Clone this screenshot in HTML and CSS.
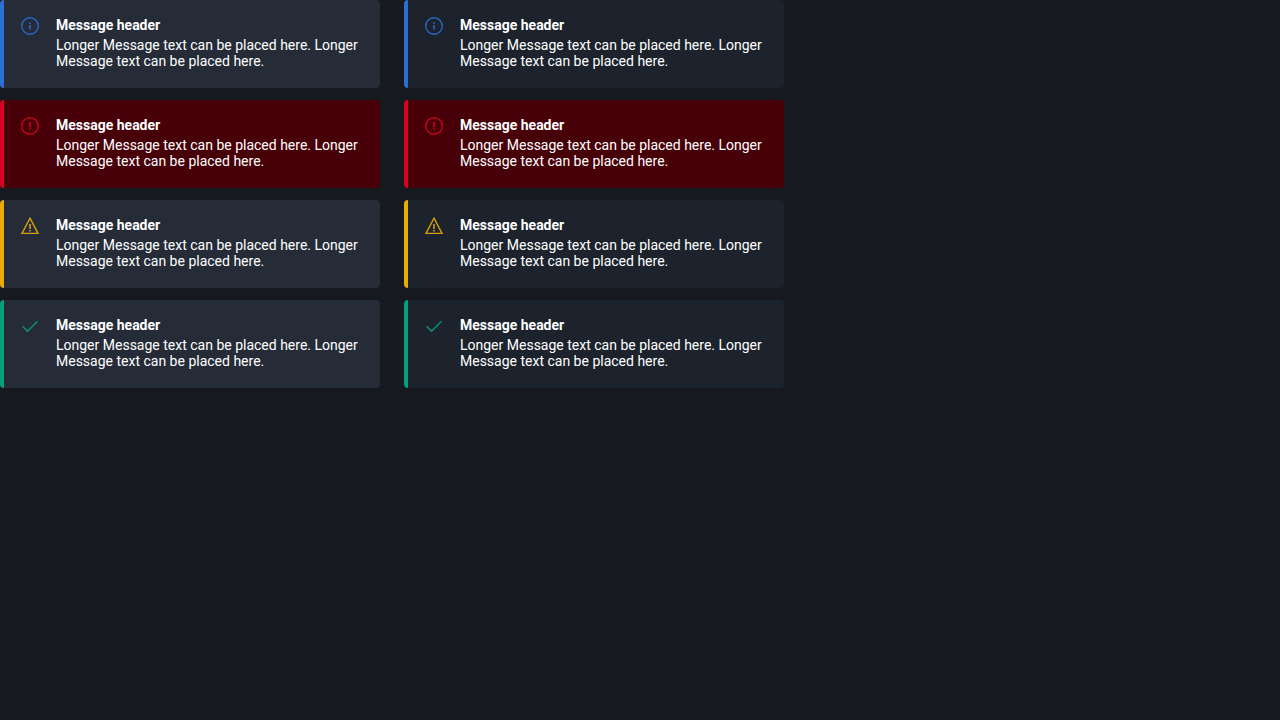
FILE: index.html
```html
<!DOCTYPE html>
<html lang="en">
<head>
<meta charset="utf-8">
<title>Messages</title>
<link rel="stylesheet" href="styles.css">
</head>
<body>
<svg class="sprite" aria-hidden="true">
  <symbol id="info" viewBox="0 0 20 20"><circle cx="10" cy="10" r="8.3"/><path class="mark" d="M10 9v4.4M10 6.4v1.5"/></symbol>
  <symbol id="error" viewBox="0 0 20 20"><circle cx="10" cy="10" r="8.3"/><path class="mark" d="M10 6v5.4M10 12.4v1.5"/></symbol>
  <symbol id="warning" viewBox="0 0 20 20"><path d="M10 2.2L18 17.4H2z"/><path class="mark" d="M10 8v5M10 14v1.5"/></symbol>
  <symbol id="success" viewBox="0 0 20 20"><path d="M2.6 10.2L7.6 15.2L17.5 5.3"/></symbol>
</svg>
<main class="messages">
  <article class="message info">
    <svg class="icon" aria-hidden="true"><use href="#info"/></svg>
    <div class="content"><h2 class="title">Message header</h2><p class="text">Longer Message text can be placed here. Longer Message text can be placed here.</p></div>
  </article>
  <article class="message info alternate">
    <svg class="icon" aria-hidden="true"><use href="#info"/></svg>
    <div class="content"><h2 class="title">Message header</h2><p class="text">Longer Message text can be placed here. Longer Message text can be placed here.</p></div>
  </article>
  <article class="message error">
    <svg class="icon" aria-hidden="true"><use href="#error"/></svg>
    <div class="content"><h2 class="title">Message header</h2><p class="text">Longer Message text can be placed here. Longer Message text can be placed here.</p></div>
  </article>
  <article class="message error alternate">
    <svg class="icon" aria-hidden="true"><use href="#error"/></svg>
    <div class="content"><h2 class="title">Message header</h2><p class="text">Longer Message text can be placed here. Longer Message text can be placed here.</p></div>
  </article>
  <article class="message warning">
    <svg class="icon" aria-hidden="true"><use href="#warning"/></svg>
    <div class="content"><h2 class="title">Message header</h2><p class="text">Longer Message text can be placed here. Longer Message text can be placed here.</p></div>
  </article>
  <article class="message warning alternate">
    <svg class="icon" aria-hidden="true"><use href="#warning"/></svg>
    <div class="content"><h2 class="title">Message header</h2><p class="text">Longer Message text can be placed here. Longer Message text can be placed here.</p></div>
  </article>
  <article class="message success">
    <svg class="icon" aria-hidden="true"><use href="#success"/></svg>
    <div class="content"><h2 class="title">Message header</h2><p class="text">Longer Message text can be placed here. Longer Message text can be placed here.</p></div>
  </article>
  <article class="message success alternate">
    <svg class="icon" aria-hidden="true"><use href="#success"/></svg>
    <div class="content"><h2 class="title">Message header</h2><p class="text">Longer Message text can be placed here. Longer Message text can be placed here.</p></div>
  </article>
</main>
</body>
</html>
```
FILE: styles.css
```css
body {
  margin: 0;
  background: #16191d;
  color: #fff;
  font-family: Roboto, "Liberation Sans", Arial, sans-serif;
  font-size: 14px;
  line-height: 16px;
}

.sprite {
  display: none;
}

.messages {
  display: grid;
  grid-template-columns: repeat(2, minmax(0, 380px));
  gap: 12px 24px;
}

.message {
  --accent: #2b6fd6;
  display: flex;
  gap: 16px;
  box-sizing: border-box;
  padding: 16px 16px 19px;
  border-left: 4px solid var(--accent);
  border-radius: 4px;
  background: #252c37;
}

.alternate {
  background: #1c232c;
}

.error {
  --accent: #d70321;
  background: #480008;
}

.warning {
  --accent: #e8ab07;
}

.success {
  --accent: #05a17f;
}

.icon {
  flex: none;
  width: 20px;
  height: 20px;
  fill: none;
  stroke: var(--accent);
  stroke-width: 1.4;
  opacity: 0.9;
}

.mark {
  stroke-width: 2;
  opacity: 0.8;
}

.title {
  margin: 0 0 3px;
  font-size: 14px;
  font-weight: 700;
  line-height: 18px;
}

.text {
  margin: 0;
}
```
